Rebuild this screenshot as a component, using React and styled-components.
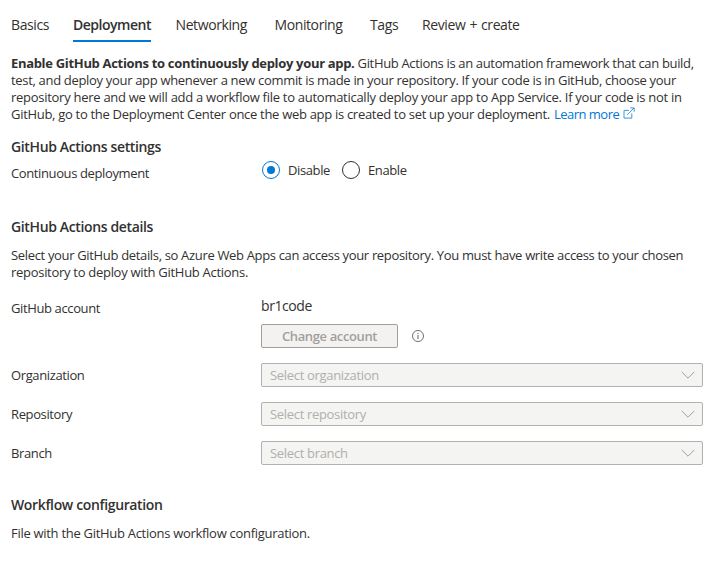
import React from 'react';
import styled, { createGlobalStyle } from 'styled-components';

const GlobalStyle = createGlobalStyle`
  *, *::before, *::after { box-sizing: border-box; }
  body { margin: 0; background: #fff; }
`;

const Page = styled.main`
  width: 716px;
  height: 562px;
  padding: 15px 13px 0 11px;
  overflow: hidden;
  font-family: "Open Sans", "Noto Sans", sans-serif;
  font-size: 13px;
  line-height: 17px;
  letter-spacing: -0.33px;
  color: #323130;
  background: #fff;
`;

const TabBar = styled.nav`
  display: flex;
  height: 27px;
`;

const Tab = styled.a`
  width: ${(p) => p.$width}px;
  margin-right: ${(p) => p.$gap}px;
  height: 27px;
  font-size: 14px;
  line-height: 20px;
  letter-spacing: ${(p) => (p.$active ? -0.48 : -0.4)}px;
  word-spacing: 0.8px;
  font-weight: ${(p) => (p.$active ? 600 : 400)};
  border-bottom: 2px solid ${(p) => (p.$active ? '#0078d4' : 'transparent')};
  white-space: nowrap;
`;

const Paragraph = styled.p`
  margin: ${(p) => p.$top}px 0 0;
`;

const Line = styled.span`
  display: block;
  white-space: nowrap;
  letter-spacing: ${(p) => p.$tracking}px;
`;

const Strong = styled.strong`
  font-weight: 700;
  letter-spacing: -0.32px;
`;

const Link = styled.a`
  margin-left: 1px;
  color: #0078d4;
  letter-spacing: -0.52px;

  svg {
    margin-left: 4px;
    vertical-align: 0;
  }
`;

const Heading = styled.h2`
  margin: ${(p) => p.$top}px 0 0;
  font-size: 14px;
  line-height: 20px;
  font-weight: 600;
  letter-spacing: -0.36px;
`;

const Field = styled.div`
  display: grid;
  grid-template-columns: 250px 442px;
  align-items: start;
  height: ${(p) => p.$height}px;
  margin-top: ${(p) => p.$top}px;
`;

const Label = styled.label`
  padding-top: 4px;
  letter-spacing: -0.38px;
`;

const RadioGroup = styled.div`
  display: flex;
  gap: 12px;
  padding-left: 1px;
`;

const RadioOption = styled.label`
  display: flex;
  align-items: center;
  gap: 8px;
  height: 18px;
  letter-spacing: -0.38px;
`;

const RadioMark = styled.span`
  display: grid;
  place-items: center;
  width: 18px;
  height: 18px;
  border: 1px solid ${(p) => (p.$checked ? '#0078d4' : '#323130')};
  border-radius: 50%;

  &::after {
    content: "";
    width: 8px;
    height: 8px;
    border-radius: 50%;
    background: ${(p) => (p.$checked ? '#0078d4' : 'transparent')};
  }
`;

const AccountName = styled.div`
  font-size: 14px;
  line-height: 20px;
  letter-spacing: -0.42px;
`;

const AccountActions = styled.div`
  display: flex;
  align-items: center;
  gap: 14px;
  margin-top: 8px;
`;

const Button = styled.button`
  width: 137px;
  height: 24px;
  padding: 0;
  border: 1px solid #a19f9d;
  border-radius: 2px;
  background: #f3f2f1;
  color: #a19f9d;
  font: 600 13px/20px "Open Sans", "Noto Sans", sans-serif;
  letter-spacing: -0.37px;
`;

const Select = styled.div`
  display: flex;
  align-items: center;
  justify-content: space-between;
  height: 24px;
  padding: 0 7px 0 8px;
  border: 1px solid #b3b1af;
  border-radius: 2px;
  background: #f4f4f2;
  color: #b1afad;
  letter-spacing: -0.32px;
`;

const ExternalIcon = () => (
  <svg width="12" height="12" viewBox="0 0 12 12" fill="none" stroke="#0078d4" strokeWidth="0.75">
    <path d="M6 3.4H1v7.7h7.8V6.4M4.2 7.8 10.9 1.1M7.3.9h3.9v3.9" />
  </svg>
);

const InfoIcon = () => (
  <svg width="12" height="12" viewBox="0 0 12 12" fill="none" stroke="#605e5c">
    <circle cx="6" cy="6" r="5.5" strokeWidth="0.9" />
    <path d="M6 5v4M6 3v1.1" />
  </svg>
);

const ChevronIcon = () => (
  <svg width="14" height="8" viewBox="0 0 14 8" fill="none" stroke="#a19f9d">
    <path d="m.7.9 6.3 6.3L13.3.9" />
  </svg>
);

const tabs = [
  ['Basics', 37, 25],
  ['Deployment', 78, 24.5],
  ['Networking', 72, 27],
  ['Monitoring', 69, 26.5],
  ['Tags', 27, 25],
  ['Review + create', 98, 0],
];

const selects = [
  ['Organization', 'Select organization'],
  ['Repository', 'Select repository'],
  ['Branch', 'Select branch'],
];

export default function App() {
  return (
    <Page>
      <GlobalStyle />
      <TabBar>
        {tabs.map(([name, width, gap]) => (
          <Tab key={name} $width={width} $gap={gap} $active={name === 'Deployment'}>
            {name}
          </Tab>
        ))}
      </TabBar>

      <Paragraph $top={13}>
        <Line $tracking={-0.34}>
          <Strong>Enable GitHub Actions to continuously deploy your app.</Strong> GitHub Actions is an
          automation framework that can build,
        </Line>
        <Line $tracking={-0.32}>
          test, and deploy your app whenever a new commit is made in your repository. If your code is in
          GitHub, choose your
        </Line>
        <Line $tracking={-0.275}>
          repository here and we will add a workflow file to automatically deploy your app to App
          Service. If your code is not in
        </Line>
        <Line $tracking={-0.3}>
          GitHub, go to the Deployment Center once the web app is created to set up your deployment.{' '}
          <Link>
            Learn more
            <ExternalIcon />
          </Link>
        </Line>
      </Paragraph>

      <Heading $top={14}>GitHub Actions settings</Heading>
      <Field $top={4} $height={30}>
        <Label>Continuous deployment</Label>
        <RadioGroup>
          <RadioOption>
            <RadioMark $checked />
            Disable
          </RadioOption>
          <RadioOption>
            <RadioMark />
            Enable
          </RadioOption>
        </RadioGroup>
      </Field>

      <Heading $top={26}>GitHub Actions details</Heading>
      <Paragraph $top={10}>
        <Line $tracking={-0.335}>
          Select your GitHub details, so Azure Web Apps can access your repository. You must have write
          access to your chosen
        </Line>
        <Line $tracking={-0.29}>repository to deploy with GitHub Actions.</Line>
      </Paragraph>

      <Field $top={15} $height={52}>
        <Label>GitHub account</Label>
        <div>
          <AccountName>br1code</AccountName>
          <AccountActions>
            <Button disabled>Change account</Button>
            <InfoIcon />
          </AccountActions>
        </div>
      </Field>

      {selects.map(([label, placeholder]) => (
        <Field key={label} $top={15} $height={24}>
          <Label>{label}</Label>
          <Select>
            {placeholder}
            <ChevronIcon />
          </Select>
        </Field>
      ))}

      <Heading $top={30}>Workflow configuration</Heading>
      <Paragraph $top={10}>
        <Line $tracking={-0.29}>File with the GitHub Actions workflow configuration.</Line>
      </Paragraph>
    </Page>
  );
}
